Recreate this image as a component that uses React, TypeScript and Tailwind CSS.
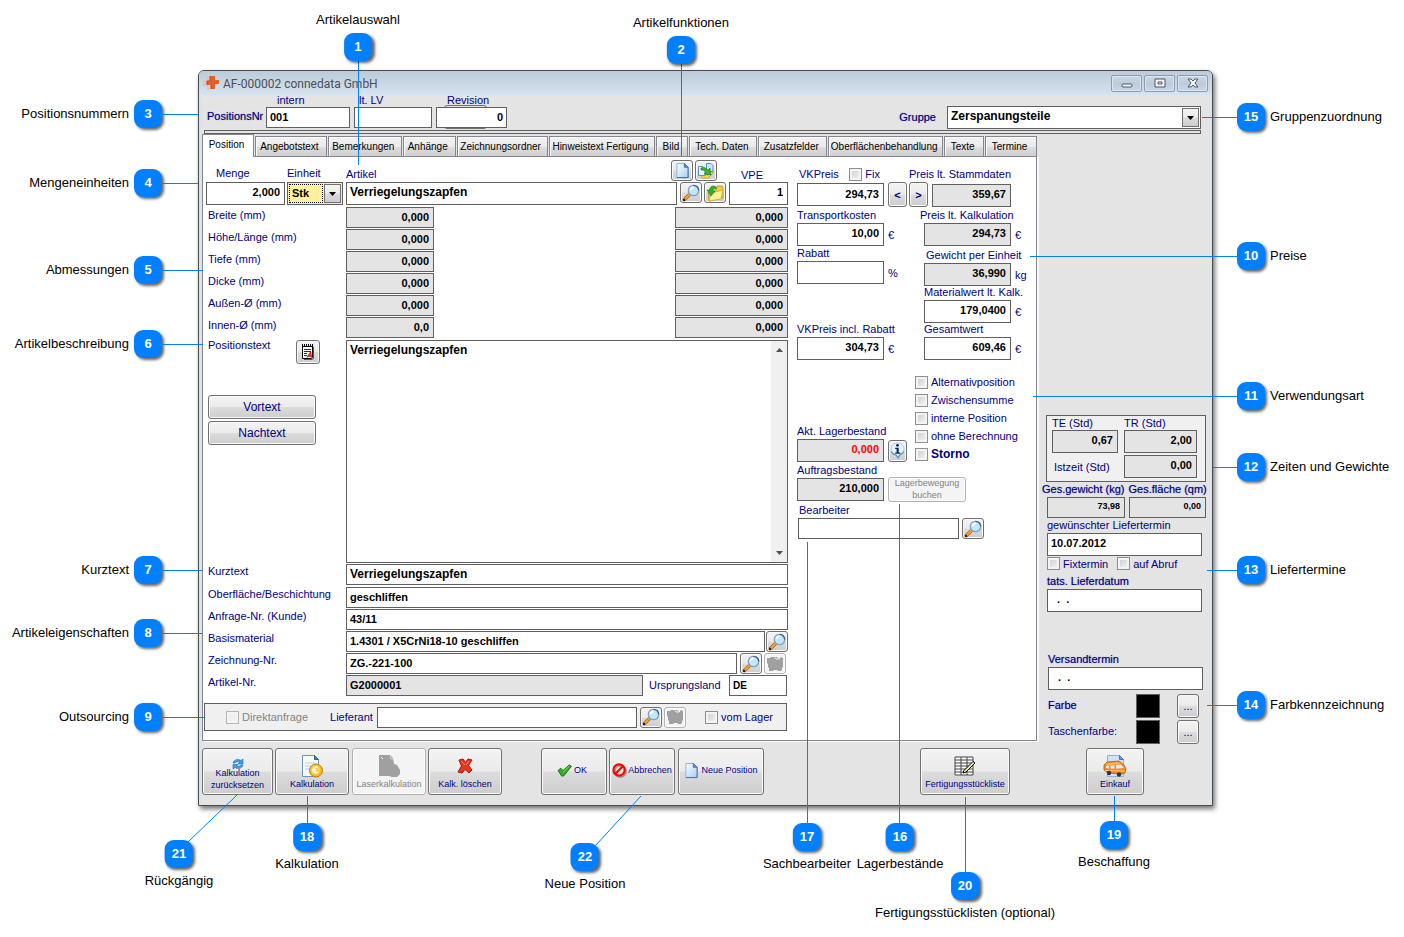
import clsx from "clsx";
import React, { useId } from "react";

const BOX = "block border border-[#5f5f5f] rounded-none outline-none font-bold";
const BUTTON =
  "flex items-center justify-center rounded-[3px] border border-[#707070] bg-[linear-gradient(#f3f3f3,#ebebeb_48%,#dcdcdc_52%,#cdcdcd)] shadow-[inset_0_0_0_1px_#fafafa] text-[#000080]";
const BUTTON_OFF =
  "flex items-center justify-center rounded-[3px] border border-[#adb2b5] bg-[#f4f4f4] shadow-[inset_0_0_0_1px_#fdfdfd] text-[#838383]";
const STRONG = "[text-shadow:0_0_1px_#00008080]";

const tabs = [
  { title: "Angebotstext", className: "w-[72px]" },
  { title: "Bemerkungen", className: "w-[74px]" },
  { title: "Anhänge", className: "w-[53px]" },
  { title: "Zeichnungsordner", className: "w-[91px]" },
  { title: "Hinweistext Fertigung", className: "w-[107px]" },
  { title: "Bild", className: "w-[32px]" },
  { title: "Tech. Daten", className: "w-[68px]" },
  { title: "Zusatzfelder", className: "w-[69px]" },
  { title: "Oberflächenbehandlung", className: "w-[115px]" },
  { title: "Texte", className: "w-[40px]" },
  { title: "Termine", className: "w-[52px]" },
];

const dimensions = [
  { label: "Breite (mm)", first: "0,000", second: "0,000" },
  { label: "Höhe/Länge (mm)", first: "0,000", second: "0,000" },
  { label: "Tiefe (mm)", first: "0,000", second: "0,000" },
  { label: "Dicke (mm)", first: "0,000", second: "0,000" },
  { label: "Außen-Ø (mm)", first: "0,000", second: "0,000" },
  { label: "Innen-Ø (mm)", first: "0,0", second: "0,000" },
];

const usages = ["Alternativposition", "Zwischensumme", "interne Position", "ohne Berechnung", "Storno"];

// y is the centre of the badge, reach is the length of the leader line
const leftNotes = [
  { n: 3, text: "Positionsnummern", y: 114, reach: 36 },
  { n: 4, text: "Mengeneinheiten", y: 183, reach: 36 },
  { n: 5, text: "Abmessungen", y: 270, reach: 41 },
  { n: 6, text: "Artikelbeschreibung", y: 344, reach: 41 },
  { n: 7, text: "Kurztext", y: 570, reach: 40 },
  { n: 8, text: "Artikeleigenschaften", y: 633, reach: 40 },
  { n: 9, text: "Outsourcing", y: 717, reach: 42 },
];

const rightNotes = [
  { n: 15, text: "Gruppenzuordnung", y: 117, reach: 35 },
  { n: 10, text: "Preise", y: 256, reach: 207 },
  { n: 11, text: "Verwendungsart", y: 396, reach: 204 },
  { n: 12, text: "Zeiten und Gewichte", y: 467, reach: 24 },
  { n: 13, text: "Liefertermine", y: 570, reach: 30 },
  { n: 14, text: "Farbkennzeichnung", y: 705, reach: 30 },
];

const topNotes = [
  { n: 1, text: "Artikelauswahl", x: 358, y: 10 },
  { n: 2, text: "Artikelfunktionen", x: 681, y: 13 },
];

const bottomNotes = [
  { n: 21, text: "Rückgängig", x: 179, y: 840 },
  { n: 18, text: "Kalkulation", x: 307, y: 823 },
  { n: 22, text: "Neue Position", x: 585, y: 843 },
  { n: 17, text: "Sachbearbeiter", x: 807, y: 823 },
  { n: 16, text: "Lagerbestände", x: 900, y: 823 },
  { n: 20, text: "Fertigungsstücklisten (optional)", x: 965, y: 872 },
  { n: 19, text: "Beschaffung", x: 1114, y: 821 },
];

export default function App() {
  return (
    <main className="relative min-h-screen bg-white pt-[70px] pr-[191px] pb-[130px] pl-[198px] font-['Liberation_Sans',Arial,sans-serif] text-[11px] leading-[14px] text-[#000080]">
      <section className="rounded-t-md border border-[#4b4b4b] bg-[#d9e4ef] shadow-[2px_3px_5px_rgba(0,0,0,0.55)]">
        <TitleBar />
        <div className="mr-[2px] ml-[3px] bg-[#e4e4e4] pb-[10px]">
          <Header />
          <div className="flex">
            <div className="mb-[7px] flex min-w-0 flex-1 flex-col">
              <TabBar />
              <div className="flex border border-[#85858f] bg-white pb-[9px] shadow-[2px_1px_0_#fafafa]">
                <ArticleForm />
                <PriceForm />
              </div>
            </div>
            <Sidebar />
          </div>
          <Footer />
        </div>
      </section>
      <Notes />
    </main>
  );
}

const TitleBar = () => (
  <header className="flex h-6 items-center rounded-t-[5px] bg-[linear-gradient(#bccbd9,#d6e3f0)] pr-1 pl-1">
    <svg viewBox="0 0 16 16" className="h-4 w-4">
      <path d="M1 6h4V2h2v4M1 6v4h4v4h2" fill="none" stroke="#f3b9a0" strokeWidth="1.500" />
      <path d="M7 1h5v4h4v4h-4v5H8v-4H4V6h3z" fill="#e4602b" />
      <path d="M7 1v5H4v4M8 10v4" stroke="#b94a28" strokeWidth="1" fill="none" />
    </svg>
    <h1 className="ml-1 pt-[2px] font-[Roboto,sans-serif] text-xs text-[#4a4f57]">AF-000002 connedata GmbH</h1>
    <div className="ml-auto flex gap-[2px]">
      <WindowButton label="Minimieren">
        <rect x="1" y="7" width="10" height="3" rx="1" />
      </WindowButton>
      <WindowButton label="Maximieren">
        <path d="M1 2h10v8H1z" />
        <path d="M4 5h4v2H4z" />
      </WindowButton>
      <WindowButton label="Schließen">
        <path d="M1 2h3l2 2 2-2h3L8 6l3 4H8L6 8l-2 2H1l3-4z" />
      </WindowButton>
    </div>
  </header>
);

const WindowButton = ({ label, children }: { label: string; children: React.ReactNode }) => (
  <button
    aria-label={label}
    className="flex h-[17px] w-[31px] items-center justify-center rounded-[2px] border border-[#8c9bb0] bg-[linear-gradient(#cbd8e5,#bccbdb_50%,#c9d8e8)] shadow-[inset_0_0_0_1px_#dbe6f1]"
  >
    <svg viewBox="0 0 12 12" className="h-3 w-3" fill="#f4f6f8" stroke="#50555e" strokeWidth="1">
      {children}
    </svg>
  </button>
);

const Header = () => (
  <>
    <div className="flex h-[35px] items-start pl-[5px] pr-[9px]">
      <span className={clsx("w-[59px] pt-[14px]", STRONG)}>PositionsNr</span>
      <div className="flex gap-1">
        <HeaderField label="intern" value="001" className="w-[84px]" labelClassName="pl-[11px]" />
        <HeaderField label="lt. LV" value="" className="w-[78px]" labelClassName="pl-[5px]" />
        <div className="relative">
          {/* edge of the spin box behind the revision number */}
          <span className="absolute top-[10px] left-2 h-6 w-[43px] rounded-[3px] border border-[#707070]" />
          <div className="relative">
            <HeaderField label="Revision" value="0" className="w-[71px] text-right" labelClassName="pl-[11px]" />
          </div>
        </div>
      </div>
      <label htmlFor="gruppe" className={clsx("mr-[11px] ml-auto pt-[15px]", STRONG)}>
        Gruppe
      </label>
      <div className="relative mt-[11px]">
        <select
          id="gruppe"
          className="block h-[23px] w-[254px] appearance-none border border-[#5f5f5f] bg-white pb-[3px] pl-[3px] text-xs font-bold text-black"
        >
          <option>Zerspanungsteile</option>
        </select>
        <DropArrow />
      </div>
    </div>
    <div className="mr-[9px] ml-[2px] h-1 border border-[#5f5f5f]" />
  </>
);

const HeaderField = ({
  label,
  value,
  className,
  labelClassName,
}: {
  label: string;
  value: string;
  className: string;
  labelClassName: string;
}) => {
  const id = useId();
  return (
    <div>
      <label htmlFor={id} className={clsx("block h-3 leading-[10px]", labelClassName)}>
        {label}
      </label>
      <input
        id={id}
        defaultValue={value}
        className={clsx(BOX, "h-[21px] bg-white px-[3px] pb-px text-black", className)}
      />
    </div>
  );
};

const DropArrow = () => (
  <span className="pointer-events-none absolute top-[2px] right-[2px] bottom-[2px] flex w-[17px] items-center justify-center border border-[#707070] bg-[linear-gradient(#f3f3f3,#ebebeb_48%,#dcdcdc_52%,#cdcdcd)]">
    <svg viewBox="0 0 7 4" className="h-1 w-[7px]">
      <path d="M0 0h7L3.500 4z" fill="#000" />
    </svg>
  </span>
);

const TabBar = () => (
  <nav className="flex h-[22px] items-end gap-px text-[10px] whitespace-nowrap text-black">
    <button className="z-10 -mb-px flex h-[23px] w-[52px] justify-center border border-b-0 border-[#85858f] bg-white pt-[3px] pr-[3px]">
      Position
    </button>
    {tabs.map((tab) => (
      <button
        key={tab.title}
        className={clsx(
          "flex h-5 items-center justify-center border border-b-0 border-[#85858f] bg-[linear-gradient(#f2f2f2,#ebebeb_50%,#dcdcdc_54%,#cfcfcf)] pr-[3px] shadow-[inset_1px_1px_0_#fafafa]",
          tab.className,
        )}
      >
        {tab.title}
      </button>
    ))}
  </nav>
);

const ArticleForm = () => (
  <div className="min-w-0 flex-1 pl-[3px]">
    <div className="mb-[2px] flex h-12 items-end">
      <div className="w-[79px]">
        <label htmlFor="menge" className="mb-[2px] block pl-[10px]">
          Menge
        </label>
        <input
          id="menge"
          defaultValue="2,000"
          className={clsx(BOX, "h-[23px] w-full bg-white px-1 pb-[3px] text-right text-black")}
        />
      </div>
      <div className="ml-[2px] w-14">
        <label htmlFor="einheit" className="mb-[2px] block pl-0">
          Einheit
        </label>
        <div className="relative">
          <select
            id="einheit"
            className="block h-[23px] w-full appearance-none border border-[#5f5f5f] bg-[#fff0a0] pb-px pl-1 font-bold text-black"
          >
            <option>Stk</option>
          </select>
          <span className="pointer-events-none absolute inset-y-[2px] right-5 left-[2px] border border-dotted border-black" />
          <DropArrow />
        </div>
      </div>
      <div className="ml-[3px] min-w-0 flex-1">
        <div className="mb-px flex items-end justify-between pr-[9px]">
          <label htmlFor="artikel">Artikel</label>
          <div className="flex gap-[2px]">
            <IconButton label="Neuer Artikel">
              <PageIcon />
            </IconButton>
            <IconButton label="Artikel kopieren">
              <SwapIcon />
            </IconButton>
          </div>
        </div>
        <div className="flex items-start gap-[2px]">
          <input
            id="artikel"
            defaultValue="Verriegelungszapfen"
            className={clsx(BOX, "mr-px h-[23px] min-w-0 flex-1 bg-white px-[3px] pb-[3px] text-xs text-black")}
          />
          <IconButton label="Artikel suchen">
            <SearchIcon />
          </IconButton>
          <IconButton label="Artikel übernehmen">
            <FolderIcon />
          </IconButton>
        </div>
      </div>
      <div className="ml-[3px] w-[59px]">
        <label htmlFor="vpe" className="block pl-3">
          VPE
        </label>
        <input
          id="vpe"
          defaultValue="1"
          className={clsx(BOX, "h-[23px] w-full bg-white px-1 pb-[3px] text-right text-black")}
        />
      </div>
    </div>

    <div className="mb-[2px] flex flex-col gap-px">
      {dimensions.map((row) => (
        <Row key={row.label} label={row.label} labelClassName="pt-px">
          <input
            aria-label={row.label}
            readOnly
            defaultValue={row.first}
            className={clsx(BOX, "h-[21px] w-[88px] bg-[#e4e4e4] px-1 pb-[2px] text-right text-black")}
          />
          <input
            aria-label={row.label + " 2"}
            readOnly
            defaultValue={row.second}
            className={clsx(BOX, "ml-auto h-[21px] w-[113px] bg-[#e4e4e4] px-1 pb-[2px] text-right text-black")}
          />
        </Row>
      ))}
    </div>

    <div className="mb-px flex">
      <div className="w-[140px] pl-[2px]">
        <div className="flex justify-between pr-[26px]">
          <label htmlFor="positionstext" className="-mt-[2px]">
            Positionstext
          </label>
          <button aria-label="Text bearbeiten" className={clsx(BUTTON, "h-6 w-6")}>
            <NotepadIcon />
          </button>
        </div>
        <button className={clsx(BUTTON, "mt-[31px] h-6 w-[108px] text-xs")}>Vortext</button>
        <button className={clsx(BUTTON, "mt-[2px] h-6 w-[108px] text-xs")}>Nachtext</button>
      </div>
      <div className="flex h-[223px] flex-1 border border-[#5f5f5f] bg-white">
        <textarea
          id="positionstext"
          defaultValue="Verriegelungszapfen"
          className="block flex-1 resize-none overflow-hidden px-[3px] pt-px text-xs font-bold text-black outline-none"
        />
        <div className="flex w-4 flex-col items-center justify-between bg-[#f0f0f0] py-[7px]">
          <svg viewBox="0 0 7 4" className="h-1 w-[7px]">
            <path d="M0 4h7L3.500 0z" fill="#505050" />
          </svg>
          <svg viewBox="0 0 7 4" className="h-1 w-[7px]">
            <path d="M0 0h7L3.500 4z" fill="#505050" />
          </svg>
        </div>
      </div>
    </div>

    <div className="flex flex-col gap-px">
      <Row label="Kurztext" htmlFor="kurztext">
        <TextBox id="kurztext" value="Verriegelungszapfen" className="mb-px text-xs" />
      </Row>
      <Row label="Oberfläche/Beschichtung" htmlFor="oberflaeche">
        <TextBox id="oberflaeche" value="geschliffen" />
      </Row>
      <Row label="Anfrage-Nr. (Kunde)" htmlFor="anfrage">
        <TextBox id="anfrage" value="43/11" />
      </Row>
      <Row label="Basismaterial" htmlFor="basismaterial">
        <TextBox id="basismaterial" value="1.4301 / X5CrNi18-10 geschliffen" />
        <IconButton label="Material suchen">
          <SearchIcon />
        </IconButton>
      </Row>
      <Row label="Zeichnung-Nr." htmlFor="zeichnung">
        <TextBox id="zeichnung" value="ZG.-221-100" />
        <div className="flex gap-[2px] pr-[2px] pl-[2px]">
          <IconButton label="Zeichnung suchen">
            <SearchIcon />
          </IconButton>
          <IconButton label="Zeichnung öffnen" disabled>
            <BlobIcon />
          </IconButton>
        </div>
      </Row>
      <Row label="Artikel-Nr." htmlFor="artikelnr">
        <TextBox id="artikelnr" value="G2000001" readOnly />
        <label htmlFor="land" className="w-[84px] pt-[3px] pl-[5px]">
          Ursprungsland
        </label>
        <input
          id="land"
          defaultValue="DE"
          className={clsx(BOX, "mr-px h-[21px] w-[58px] bg-white px-[3px] pb-px text-[10px] text-black")}
        />
      </Row>
    </div>

    <div className="mt-[7px] mr-px -ml-[2px] flex h-7 items-center border border-[#5f5f5f] bg-[#f0f0f0] pr-[13px] pl-[21px]">
      <Check label="Direktanfrage" disabled />
      <label htmlFor="lieferant" className="ml-[22px] pb-px">
        Lieferant
      </label>
      <TextBox id="lieferant" value="" className="mr-[3px] ml-1" />
      <div className="flex gap-[2px]">
        <IconButton label="Lieferant suchen">
          <SearchIcon />
        </IconButton>
        <IconButton label="Lieferant öffnen" disabled>
          <BlobIcon />
        </IconButton>
      </div>
      <div className="ml-[19px]">
        <Check label="vom Lager" />
      </div>
    </div>
  </div>
);

const Row = ({
  label,
  htmlFor,
  labelClassName,
  children,
}: {
  label: string;
  htmlFor?: string;
  labelClassName?: string;
  children: React.ReactNode;
}) => (
  <div className="flex items-start gap-px">
    <label htmlFor={htmlFor} className={clsx("w-[139px] shrink-0 pl-[2px]", labelClassName)}>
      {label}
    </label>
    {children}
  </div>
);

const TextBox = ({
  id,
  value,
  readOnly,
  className,
}: {
  id: string;
  value: string;
  readOnly?: boolean;
  className?: string;
}) => (
  <input
    id={id}
    readOnly={readOnly}
    defaultValue={value}
    className={clsx(
      BOX,
      "h-[21px] min-w-0 flex-1 px-[3px] pb-[2px] text-black",
      readOnly ? "bg-[#e4e4e4]" : "bg-white",
      className,
    )}
  />
);

const Check = ({ label, disabled, strong }: { label: string; disabled?: boolean; strong?: boolean }) => (
  <label
    className={clsx("flex items-center gap-[3px] whitespace-nowrap", disabled && "text-[#838383]", strong && "text-xs font-bold")}
  >
    <input
      type="checkbox"
      disabled={disabled}
      className="h-[13px] w-[13px] appearance-none border border-[#8e8f8f] bg-[linear-gradient(135deg,#c6cad0,#f8f8f8)] shadow-[inset_0_0_0_2px_#f4f4f4] disabled:border-[#b5b5b5] disabled:bg-none"
    />
    {label}
  </label>
);

const PriceField = ({
  label,
  value,
  unit,
  readOnly,
  labelClassName,
  className,
}: {
  label: string;
  value: string;
  unit?: React.ReactNode;
  readOnly?: boolean;
  labelClassName?: string;
  className?: string;
}) => {
  const id = useId();
  return (
    <div>
      <label htmlFor={id} className={clsx("block h-[15px] whitespace-nowrap", labelClassName)}>
        {label}
      </label>
      <div className="flex items-center gap-1">
        <input
          id={id}
          readOnly={readOnly}
          defaultValue={value}
          className={clsx(
            BOX,
            "h-[23px] w-[87px] px-1 pb-[3px] text-right",
            readOnly ? "bg-[#e4e4e4]" : "bg-white",
            className ?? "text-black",
          )}
        />
        {unit}
      </div>
    </div>
  );
};

const PriceForm = () => (
  <div className="ml-[9px] w-[239px] shrink-0">
    <div className="flex h-[51px] items-end">
      <div>
        <div className="mb-[2px] flex items-center justify-between pr-1 pl-[2px]">
          <label htmlFor="vkpreis">VKPreis</label>
          <Check label="Fix" />
        </div>
        <input
          id="vkpreis"
          defaultValue="294,73"
          className={clsx(BOX, "mb-[2px] h-[23px] w-[87px] bg-white px-1 pb-[2px] text-right text-black")}
        />
      </div>
      <button className={clsx(BUTTON, "mb-px ml-1 h-[25px] w-[19px] font-bold")}>&lt;</button>
      <button className={clsx(BUTTON, "mb-px ml-[2px] h-[25px] w-[19px] font-bold")}>&gt;</button>
      <div className="mb-px flex w-[83px] flex-col items-end">
        <label htmlFor="stamm" className="mb-[3px] whitespace-nowrap">
          Preis lt. Stammdaten
        </label>
        <input
          id="stamm"
          readOnly
          defaultValue="359,67"
          className={clsx(BOX, "h-[23px] w-[79px] bg-[#e4e4e4] px-1 pb-[3px] text-right text-black")}
        />
      </div>
    </div>
    <div className="flex gap-[18px]">
      <div className="w-[109px] shrink-0">
        <PriceField label="Transportkosten" value="10,00" unit="€" />
        <PriceField label="Rabatt" value="" unit="%" />
        <div className="mt-[38px]">
          <PriceField label="VKPreis incl. Rabatt" value="304,73" unit="€" />
        </div>
        <div className="mt-16">
          <PriceField
            label="Akt. Lagerbestand"
            value="0,000"
            readOnly
            className="text-[#ff0000]"
            unit={
              <button aria-label="Lagerinfo" className={clsx(BUTTON, "h-[22px] w-[19px] shrink-0")}>
                <InfoIcon />
              </button>
            }
          />
        </div>
        <div className="mt-px">
          <PriceField
            label="Auftragsbestand"
            value="210,000"
            readOnly
            unit={
              <button
                disabled
                className={clsx(BUTTON_OFF, "-my-px h-[25px] w-[78px] shrink-0 pb-[2px] text-[9px] leading-[12px]")}
              >
                Lagerbewegung
                <br />
                buchen
              </button>
            }
          />
        </div>
        <label htmlFor="bearbeiter" className="mt-[2px] block h-[15px] pl-[2px]">
          Bearbeiter
        </label>
        <div className="flex gap-[3px]">
          <input id="bearbeiter" className={clsx(BOX, "ml-px h-[21px] w-[161px] shrink-0 bg-white px-[3px] text-black")} />
          <IconButton label="Bearbeiter suchen">
            <SearchIcon />
          </IconButton>
        </div>
      </div>
      <div className="-ml-[9px]">
        <div className="flex flex-col pl-[9px]">
          <PriceField label="Preis lt. Kalkulation" value="294,73" unit="€" readOnly labelClassName="-ml-1" />
          <div className="h-[2px]" />
          <PriceField label="Gewicht per Einheit" value="36,990" unit="kg" readOnly labelClassName="pl-[2px]" />
          <PriceField label="Materialwert lt. Kalk." value="179,0400" unit="€" labelClassName="-mt-px" />
          <PriceField label="Gesamtwert" value="609,46" unit="€" labelClassName="-mt-px" />
        </div>
        <div className="mt-[13px]">
          {usages.map((usage) => (
            <div key={usage} className="flex h-[18px] items-center">
              <Check label={usage} strong={usage === "Storno"} />
            </div>
          ))}
        </div>
      </div>
    </div>
  </div>
);

const SideField = ({ label, value, strong }: { label: string; value: string; strong?: boolean }) => {
  const id = useId();
  return (
    <div>
      <label htmlFor={id} className={clsx("block h-[15px]", strong && STRONG)}>
        {label}
      </label>
      <input
        id={id}
        defaultValue={value}
        className={clsx(BOX, "h-[23px] w-[155px] bg-white px-[3px] pb-[3px] whitespace-pre text-black")}
      />
    </div>
  );
};

const TimeBox = ({ id, value, className }: { id: string; value: string; className?: string }) => (
  <input
    id={id}
    readOnly
    defaultValue={value}
    className={clsx(BOX, "h-[23px] w-full bg-[#e4e4e4] px-1 pb-[3px] text-right text-black", className)}
  />
);

const TotalBox = ({ id, value, className }: { id: string; value: string; className: string }) => (
  <input
    id={id}
    readOnly
    defaultValue={value}
    className={clsx(BOX, "h-[21px] bg-[#e4e4e4] px-1 pb-[3px] text-right text-[9px] text-black", className)}
  />
);

const Sidebar = () => (
  <aside className="flex w-[173px] shrink-0 flex-col justify-end pb-[3px] pl-[10px]">
    <div className="-ml-px h-[67px] w-[160px] border border-[#5f5f5f] bg-[#f0f0f0] pl-[5px]">
      <div className="grid grid-cols-[66px_73px] gap-x-[6px]">
        <label htmlFor="te">TE (Std)</label>
        <label htmlFor="tr">TR (Std)</label>
        <TimeBox id="te" value="0,67" />
        <TimeBox id="tr" value="2,00" />
        <label htmlFor="ist" className="mt-[7px] pl-[2px]">
          Istzeit (Std)
        </label>
        <TimeBox id="ist" value="0,00" className="mt-[2px]" />
      </div>
    </div>
    <div className={clsx("-ml-[5px] flex h-[15px] gap-1 whitespace-nowrap", STRONG)}>
      <label htmlFor="gewicht">Ges.gewicht (kg)</label>
      <label htmlFor="flaeche">Ges.fläche (qm)</label>
    </div>
    <div className="flex gap-1">
      <TotalBox id="gewicht" value="73,98" className="w-[78px]" />
      <TotalBox id="flaeche" value="0,00" className="w-[77px]" />
    </div>
    <SideField label="gewünschter Liefertermin" value="10.07.2012" />
    <div className="flex h-[18px] items-center gap-[9px] pb-[3px]">
      <Check label="Fixtermin" />
      <Check label="auf Abruf" />
    </div>
    <SideField label="tats. Lieferdatum" value="  .  ." strong />
    <div className="mt-10 mb-[3px] ml-px">
      <SideField label="Versandtermin" value="  .  ." strong />
    </div>
    <ColorRow label="Farbe" strong />
    <ColorRow label="Taschenfarbe:" />
  </aside>
);

const ColorRow = ({ label, strong }: { label: string; strong?: boolean }) => (
  <div className="ml-px flex h-[26px] items-center">
    <span className={clsx("w-[88px] pb-[3px]", strong && STRONG)}>{label}</span>
    <span className="h-6 w-6 border border-[#5f5f5f] bg-black" />
    <button aria-label={label + " wählen"} className={clsx(BUTTON, "ml-[17px] h-6 w-[22px]")}>
      ...
    </button>
  </div>
);

const Footer = () => (
  <footer className="flex text-[9px] leading-[12px] whitespace-nowrap">
    <div className="flex gap-[2px]">
      <button className={clsx(BUTTON, "h-[47px] w-[71px] flex-col pt-[5px]")}>
        <RefreshIcon />
        Kalkulation
        <br />
        zurücksetzen
      </button>
      <button className={clsx(BUTTON, "h-[47px] w-[74px] flex-col")}>
        <EuroIcon />
        Kalkulation
      </button>
      <button disabled className={clsx(BUTTON_OFF, "ml-px h-[47px] w-[74px] flex-col")}>
        <LaserIcon />
        Laserkalkulation
      </button>
      <button className={clsx(BUTTON, "h-[47px] w-[74px] flex-col")}>
        <DeleteIcon />
        Kalk. löschen
      </button>
    </div>
    <div className="ml-[39px] flex gap-[2px]">
      <button className={clsx(BUTTON, "h-[47px] w-[66px] gap-[2px] pr-1 pb-[3px]")}>
        <OkIcon />
        OK
      </button>
      <button className={clsx(BUTTON, "h-[47px] w-[66px] gap-px pb-[3px]")}>
        <ForbiddenIcon />
        Abbrechen
      </button>
      <button className={clsx(BUTTON, "ml-px h-[47px] w-[86px] gap-[2px] pb-[3px]")}>
        <PageIcon />
        Neue Position
      </button>
    </div>
    <div className="mr-[66px] ml-auto flex gap-[76px]">
      <button className={clsx(BUTTON, "h-[47px] w-[90px] flex-col")}>
        <TableIcon />
        Fertigungsstückliste
      </button>
      <button className={clsx(BUTTON, "h-[47px] w-[58px] flex-col")}>
        <VanIcon />
        Einkauf
      </button>
    </div>
  </footer>
);

const IconButton = ({
  label,
  disabled,
  children,
}: {
  label: string;
  disabled?: boolean;
  children: React.ReactNode;
}) => (
  <button
    aria-label={label}
    disabled={disabled}
    className={clsx(disabled ? BUTTON_OFF : BUTTON, "h-[21px] w-[22px] shrink-0")}
  >
    {children}
  </button>
);

const SearchIcon = () => (
  <svg viewBox="0 0 18 18" className="h-[18px] w-[18px]">
    <path d="M2.500 15.500L7 11" stroke="#a85f14" strokeWidth="3.400" strokeLinecap="round" />
    <path d="M3 15l4-4" stroke="#f9a02c" strokeWidth="2.200" strokeLinecap="round" />
    <circle cx="2" cy="16" r="1.200" fill="#222" />
    <circle cx="11.500" cy="6.500" r="5.200" fill="#bfe9fb" stroke="#7f9fc8" strokeWidth="1.300" />
    <path d="M11.500 1.300a5.200 5.200 0 0 1 5.200 5.200" stroke="#3f5f96" strokeWidth="1.300" fill="none" />
    <path d="M8.500 6a3 3 0 0 1 3-2.500" stroke="#fff" strokeWidth="1.800" fill="none" />
  </svg>
);

const PageIcon = () => (
  <svg viewBox="0 0 16 18" className="h-[17px] w-[15px]">
    <defs>
      <linearGradient id="page" x1="0" y1="0" x2="1" y2="1">
        <stop offset="0" stopColor="#ffffff" />
        <stop offset="1" stopColor="#a9cdef" />
      </linearGradient>
    </defs>
    <path d="M2 1.500h8l4 4v11H2z" fill="url(#page)" stroke="#8fb0d6" />
    <path d="M14 5.500v11H2" stroke="#3f6ea8" fill="none" />
    <path d="M10 1.500v4h4z" fill="#5b9ae0" stroke="#3f6ea8" />
  </svg>
);

const SwapIcon = () => (
  <svg viewBox="0 0 18 18" className="h-[18px] w-[18px]">
    <path d="M3 13l3 3h5l5-5V8l-5 5z" fill="#f7dc4a" stroke="#b89b22" strokeWidth=".8" />
    <path d="M1.500 4.500H6l2 2v7H1.500z" fill="#eaf4ff" stroke="#5d8fc4" />
    <path d="M9.500 1.500H14l2 2v6H9.500z" fill="#cfe4fa" stroke="#5d8fc4" />
    <path d="M4 6c3-1 5 0 7 2l2-2 1 7-7-1 2-2C7.500 8.500 6 8 4 8z" fill="#37b52c" stroke="#1c7a18" strokeWidth=".6" />
  </svg>
);

const FolderIcon = () => (
  <svg viewBox="0 0 18 18" className="h-[18px] w-[18px]">
    <path d="M2 8l8-1 1-5h5l1 1v11L3 17z" fill="#f0cf38" stroke="#b8931a" strokeWidth=".8" />
    <path d="M5 9l12-3-2 9-12 2z" fill="#fdf29a" stroke="#c9a824" strokeWidth=".8" />
    <path
      d="M10 3C7 1 4 2 3.500 6H1l4 6 4-5H7c0-1.500 1-2.500 3-2z"
      fill="#2fb02a"
      stroke="#1c7a18"
      strokeWidth=".6"
    />
  </svg>
);

const NotepadIcon = () => (
  <svg viewBox="0 0 14 18" className="h-[18px] w-[14px]">
    <path d="M1.500 3.500h10v11l-1 1h-9z" fill="#fff" stroke="#000" />
    <path d="M12.500 4v11l-1 1.500H3" stroke="#555" fill="none" />
    <path d="M1 2.500h12" stroke="#000" strokeWidth="3" strokeDasharray="1 1" />
    <path d="M3 6.500h7M3 8.500h7M3 10.500h3M3 12.500h3" stroke="#1a1ac8" />
    <path d="M6 14.500l3.500-5 1 5M7.500 13h3" stroke="#e01010" strokeWidth="1.300" fill="none" />
  </svg>
);

const InfoIcon = () => (
  <svg viewBox="0 0 16 18" className="h-[17px] w-[15px]">
    <path
      d="M8 1c4 0 7 2.500 7 6.500 0 3-2 5.200-4.500 6L8.500 17 6 13.500C3 13 1 10.500 1 7.500 1 3.500 4 1 8 1z"
      fill="#e6f1fa"
      stroke="#a9c6e2"
    />
    <path d="M1.500 10c1 2.500 3 3.500 5 3.800L8.500 17l2-3.500c2-.5 3.500-1.500 4-3.500" stroke="#4f97d4" strokeWidth="1.300" fill="none" />
    <circle cx="8" cy="3.500" r="1.500" fill="#0d2a5c" />
    <path d="M5.500 6h3.800v5H11v1.500H5.500V11H7V7.500H5.500z" fill="#0d2a5c" />
  </svg>
);

const BlobIcon = () => (
  <svg viewBox="0 0 18 16" className="h-4 w-[18px]">
    <path d="M1 2h3l1-1h6l1 1h2l1-1 2 1v9l-1 1v2l-1 1h-3l-1-1H8l-1 1H3v-3l-1-1V8L1 7z" fill="#a0a0a0" />
    <path d="M9 1.500l1 1.500h3l1-1" stroke="#f4f4f4" fill="none" />
  </svg>
);

const LaserIcon = () => (
  <svg viewBox="0 0 22 24" className="h-6 w-[22px]">
    <path d="M1 1h11l3 3 1 6 3 1 3 5v4l-3 3h-5l-3-1H1z" fill="#a0a0a0" />
    <path d="M3 3l2 2" stroke="#f4f4f4" />
    <path d="M12 2l1 3h2" stroke="#d8d8d8" fill="none" />
  </svg>
);

const RefreshIcon = () => (
  <svg viewBox="0 0 14 12" className="-mb-[3px] h-3 w-[14px] shrink-0">
    <path
      d="M2 5c1-3.500 5-4.500 8-2.500L12 1v5H7l1.500-1.700C7 3.300 5 3.500 4 5z"
      fill="#3aa0ea"
      stroke="#1c6bb5"
      strokeWidth=".6"
    />
    <path
      d="M12 7c-1 3.500-5 4.500-8 2.500L2 11V6.500h5L5.500 8C7 8.700 9 8.500 10 7z"
      fill="#3aa0ea"
      stroke="#1c6bb5"
      strokeWidth=".6"
    />
  </svg>
);

const EuroIcon = () => (
  <svg viewBox="0 0 22 24" className="h-6 w-[22px]">
    <path d="M1.500 1.500h12l4 4v17h-16z" fill="#f5f9fd" stroke="#6f93bb" />
    <path d="M13.500 1.500v4h4z" fill="#4c7db8" stroke="#35608f" />
    <path d="M4 9h10M4 12h7M4 15h6" stroke="#bcd0e6" />
    <circle cx="15" cy="16.500" r="6.500" fill="#f6b81c" stroke="#c27c06" />
    <circle cx="14.500" cy="16" r="4.800" fill="#fbd04e" />
    <path d="M17 13.700a2.800 2.800 0 1 0 0 4.600M11 15.300h4M11 16.800h4" stroke="#fff" strokeWidth="1.200" fill="none" />
  </svg>
);

const DeleteIcon = () => (
  <svg viewBox="0 0 16 16" className="my-1 h-4 w-4">
    <path
      d="M2 2l4-1 2.500 3.500L11 1l4 1-3.500 5.500L15 12l-3 3-4-3.500L5 15l-4-1 3.500-6z"
      fill="#e8351c"
      stroke="#a01708"
    />
    <path d="M4 3l4 4M12 3l-3 4" stroke="#ff8a70" />
  </svg>
);

const OkIcon = () => (
  <svg viewBox="0 0 16 14" className="h-[13px] w-[15px]">
    <path d="M1 7l3-2.500 2.500 2.500L13 1l2.500 1.500L7 13H5z" fill="#2fae22" stroke="#14700f" />
    <path d="M6.500 9L13 2.500" stroke="#8be27e" />
  </svg>
);

const ForbiddenIcon = () => (
  <svg viewBox="0 0 16 16" className="h-[15px] w-[15px]">
    <circle cx="9" cy="9" r="6" stroke="#999" strokeWidth="2" fill="none" />
    <circle cx="7.500" cy="7.500" r="6" stroke="#f00" strokeWidth="2.300" fill="none" />
    <path d="M3.500 11.500l8-8" stroke="#f00" strokeWidth="2.300" />
  </svg>
);

const TableIcon = () => (
  <svg viewBox="0 0 24 22" className="h-6 w-6">
    <path d="M2 2h18v18H2z" fill="#fff" />
    <path d="M2 2h18v18H2zM2 5h18M2 8h18M2 11h18M2 14h18M2 17h18M8 2v18M14 2v18" stroke="#444" fill="none" />
    <path d="M11 15.500l9-9 2 1.500-9 9-3 1z" fill="#f4f0a0" stroke="#000" />
  </svg>
);

const VanIcon = () => (
  <svg viewBox="0 0 24 24" className="h-6 w-6">
    <path d="M4.500 1.500h12l4 4v17h-16z" fill="#d3e3f7" stroke="#8db0dc" />
    <path d="M16.500 1.500v4h4z" fill="#6f9fe0" stroke="#4675b5" />
    <path d="M1 11l3-3 12-1 5 4 2 4-1 4-4 1-13-1-4-3z" fill="#f58a1c" stroke="#b55808" strokeWidth=".8" />
    <path d="M2.500 9.500L15 8l3 2-14 1.500z" fill="#ffb45e" />
    <path d="M3 12l3-.5v3l-3-.5zM7.500 11.500l4-.3v3.500l-4-.2zM13 11l5-.5 3 3.500-8 .7z" fill="#dbe8f5" />
    <path d="M2 16.500l20 .5" stroke="#ffc37d" />
    <circle cx="6" cy="19" r="2.200" fill="#333" />
    <circle cx="16" cy="20.500" r="2.200" fill="#333" />
  </svg>
);

const Badge = ({ n }: { n: number }) => (
  <span className="flex h-7 w-7 shrink-0 items-center justify-center rounded-[9px] bg-[#0080ff] text-[13px] font-bold text-white shadow-[2px_2px_3px_rgba(0,0,0,0.6)]">
    {n}
  </span>
);

const Notes = () => (
  <div className="pointer-events-none absolute inset-0 text-[13px] whitespace-nowrap text-black">
    <svg className="absolute inset-0 h-full w-full" stroke="#0080ff" fill="none">
      <path
        d="M358.500 61V165M681.500 64V156M307.500 796V823M807.500 542V823M899.500 504V823M965.500 797V872M1114.500 796V821"
        shapeRendering="crispEdges"
      />
      <path d="M237 795L188 842M641 796L596 845" />
    </svg>
    {leftNotes.map((note) => (
      <div key={note.n} className="absolute left-0 flex h-7 items-center" style={{ top: note.y - 14 }}>
        <span className="mr-[5px] w-[129px] text-right">{note.text}</span>
        <Badge n={note.n} />
        <span className="h-px bg-[#0080ff]" style={{ width: note.reach }} />
      </div>
    ))}
    {rightNotes.map((note) => (
      <div key={note.n} className="absolute right-0 flex h-7 items-center" style={{ top: note.y - 14 }}>
        <span className="h-px bg-[#0080ff]" style={{ width: note.reach }} />
        <Badge n={note.n} />
        <span className="ml-[5px] w-[134px]">{note.text}</span>
      </div>
    ))}
    {topNotes.map((note) => (
      <div
        key={note.n}
        className="absolute flex -translate-x-1/2 flex-col items-center gap-[3px] leading-[20px]"
        style={{ left: note.x, top: note.y }}
      >
        {note.text}
        <Badge n={note.n} />
      </div>
    ))}
    {bottomNotes.map((note) => (
      <div
        key={note.n}
        className="absolute flex -translate-x-1/2 flex-col items-center gap-[3px] leading-[20px]"
        style={{ left: note.x, top: note.y }}
      >
        <Badge n={note.n} />
        {note.text}
      </div>
    ))}
  </div>
);
